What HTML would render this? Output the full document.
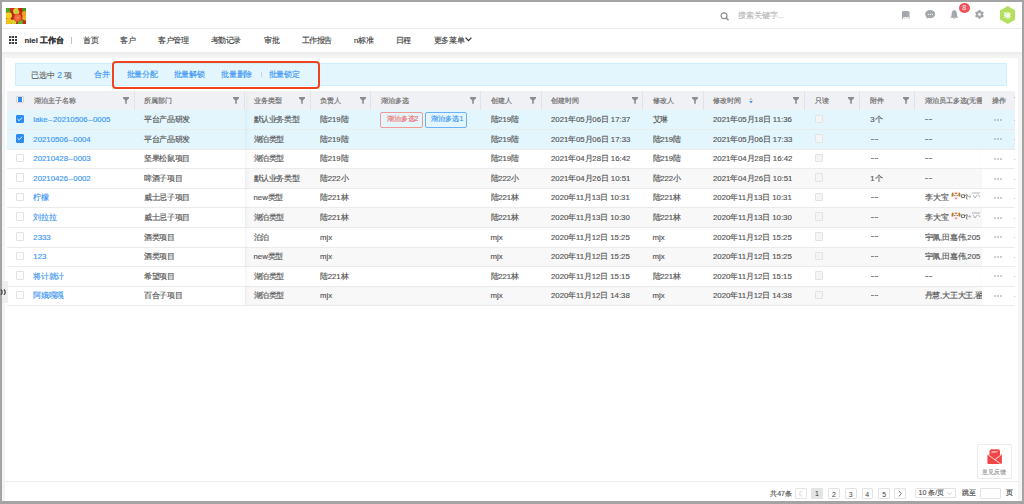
<!DOCTYPE html>
<html><head><meta charset="utf-8"><script>
(function(){try{var c=document.createElement('canvas');var x=c.getContext('2d');x.font='20px "Liberation Sans", sans-serif';var w=x.measureText('中文').width;if(w<36)document.documentElement.className+=' tofu';}catch(e){}})();
</script><style>
*{margin:0;padding:0;box-sizing:border-box}
html,body{width:1024px;height:504px;overflow:hidden;background:#f4f4f4;font-family:"Liberation Sans",sans-serif;color:#555}
.ab{position:absolute}
.t{position:absolute;white-space:nowrap;font-size:7.8px;line-height:10px;-webkit-text-stroke:0.15px currentColor}
.frame{position:absolute;background:#a4a4a4}
.cj{display:inline-block;text-align:justify;text-align-last:justify;white-space:nowrap}
.bd .cj{letter-spacing:-0.35px}
.cj1{text-align:center;text-align-last:center}
.tofu .cj{font-size:125%;line-height:0}
.nav .cj{letter-spacing:-0.4px}
.hd{color:#666;font-size:7.4px;-webkit-text-stroke:0.2px #777}
.lk{color:#3b96f5}
.fil{position:absolute;width:6px;height:7px}
.cb{position:absolute;width:8px;height:8.5px;border:0.6px solid #e2e2e2;border-radius:1px;background:#fff}
.cbon{background:#2d8cf0;border-color:#2d8cf0}
.rl{position:absolute;left:4.5px;width:1010.5px;height:0.7px;background:#ebebeb}
</style></head><body>

<div class="ab" style="left:0;top:0;width:1024px;height:52px;background:#fff"></div>
<div class="ab" style="left:0;top:51.6px;width:1024px;height:4px;background:linear-gradient(#ebebeb,#f4f4f4)"></div>
<div class="ab" style="left:0;top:28.3px;width:1024px;height:0.7px;background:#ececec"></div>
<div class="ab" style="left:4.5px;top:58px;width:1013px;height:443px;background:#fff"></div>
<div class="frame" style="left:0;top:0;width:1024px;height:1.6px"></div>
<div class="frame" style="left:0;top:0;width:2px;height:504px"></div>
<div class="frame" style="left:1021.7px;top:0;width:2.3px;height:504px"></div>
<div class="frame" style="left:0;top:501.3px;width:1024px;height:2.7px"></div>
<svg class="ab" style="left:6.2px;top:7.6px" width="19.8" height="16.6" viewBox="0 0 20 16.6">
<rect width="20" height="16.6" fill="#b8281a"/>
<circle cx="2" cy="2" r="2.8" fill="#4caa20"/><circle cx="6" cy="1.2" r="2.2" fill="#d8281c"/><circle cx="10.5" cy="3.2" r="3.2" fill="#d4d832"/><circle cx="10.8" cy="3.6" r="1.6" fill="#bcd040"/>
<circle cx="14.8" cy="1.5" r="2.4" fill="#d21e14"/><circle cx="18.6" cy="1.5" r="2.2" fill="#3c9c1c"/><circle cx="18.5" cy="5.5" r="2.6" fill="#f0a020"/><circle cx="18.8" cy="10" r="2.5" fill="#e8b420"/>
<circle cx="2.6" cy="7.5" r="3.4" fill="#f2d420"/><circle cx="2.8" cy="13.5" r="3.2" fill="#f0c418"/><circle cx="7.8" cy="14.2" r="2.6" fill="#d8d430"/><circle cx="14.6" cy="14.6" r="2.8" fill="#58b828"/><circle cx="18.8" cy="14.8" r="2" fill="#c82818"/>
<circle cx="11.8" cy="9.8" r="4" fill="#e8482a"/><circle cx="11.8" cy="9.8" r="3.2" fill="#f26a40"/><circle cx="11.8" cy="9.8" r="0.7" fill="#f8b080"/>
</svg>
<svg class="ab" style="left:720px;top:11.5px" width="9.5" height="9" viewBox="0 0 10 10"><circle cx="4.2" cy="4.2" r="3.3" fill="none" stroke="#8a8a8a" stroke-width="1.3"/><path d="M6.6 6.6 L9.2 9.2" stroke="#8a8a8a" stroke-width="1.5"/></svg>
<div class="t" style="left:737.5px;top:10.5px;color:#b8b8b8;font-size:7.6px"><span class="cj" style="width:40.00px">搜索关键字</span>...</div>
<svg class="ab" style="left:901.5px;top:10.7px" width="8.5" height="8.8" viewBox="0 0 8.5 8.8"><rect x="0.8" y="0.8" width="7.7" height="7.8" rx="1" fill="#c9ccd1"/><rect x="0" y="0" width="6.8" height="8.8" rx="1" fill="#a4a8ae"/><rect x="1" y="6" width="6.2" height="2" fill="#e9eaec"/></svg>
<svg class="ab" style="left:924.8px;top:10.1px" width="10.4" height="8.8" viewBox="0 0 10.4 8.8"><ellipse cx="5.2" cy="4.1" rx="5.1" ry="4.1" fill="#a4a8ae"/><path d="M1.6 6.3 L1.4 8.7 L4.2 7.6z" fill="#a4a8ae"/><circle cx="3.4" cy="4.4" r="0.65" fill="#eef0f2"/><circle cx="5.4" cy="4.4" r="0.65" fill="#eef0f2"/><circle cx="7.4" cy="4.4" r="0.65" fill="#eef0f2"/></svg>
<svg class="ab" style="left:949.8px;top:10px" width="8.6" height="9.4" viewBox="0 0 8.6 9.4"><path d="M4.3 0 C2.4 0.4 1.6 2 1.6 4 L1.5 6 Q1.2 7 0 7.8 L8.6 7.8 Q7.4 7 7.1 6 L7 4 C7 2 6.2 0.4 4.3 0z" fill="#a4a8ae"/><path d="M3.2 8 Q4.3 9.6 5.4 8z" fill="#a4a8ae"/></svg>
<div class="ab" style="left:958.9px;top:3px;width:10.7px;height:10px;border-radius:50%;background:#f2535a;color:#fff;font-size:7px;line-height:10px;text-align:center">8</div>
<svg class="ab" style="left:974.7px;top:10.2px" width="9" height="8.8" viewBox="-4.5 -4.4 9 8.8"><g fill="#a4a8ae"><circle cx="0" cy="-3.2" r="1.35" transform="rotate(0)"/><circle cx="0" cy="-3.2" r="1.35" transform="rotate(60)"/><circle cx="0" cy="-3.2" r="1.35" transform="rotate(120)"/><circle cx="0" cy="-3.2" r="1.35" transform="rotate(180)"/><circle cx="0" cy="-3.2" r="1.35" transform="rotate(240)"/><circle cx="0" cy="-3.2" r="1.35" transform="rotate(300)"/><circle r="3.3"/></g><circle r="1.3" fill="#fff"/></svg>
<svg class="ab" style="left:999.8px;top:6px" width="15.6" height="18" viewBox="0 0 15.6 18"><path d="M7.8 0 L15.6 4.5 L15.6 13.5 L7.8 18 L0 13.5 L0 4.5z" fill="#b3df5e"/></svg>
<div class="t" style="left:1003.8px;top:10.8px;color:#fff;font-size:6.8px;-webkit-text-stroke:0.2px #fff"><span class="cj cj1" style="width:7.00px">琳</span></div>
<svg class="ab" style="left:8.6px;top:36.1px" width="8.1" height="8" viewBox="0 0 8.1 8"><g fill="#333"><rect x="0" y="0" width="2.1" height="2" rx="0.5"/><rect x="0" y="3" width="2.1" height="2" rx="0.5"/><rect x="0" y="6" width="2.1" height="2" rx="0.5"/><rect x="3" y="0" width="2.1" height="2" rx="0.5"/><rect x="3" y="3" width="2.1" height="2" rx="0.5"/><rect x="3" y="6" width="2.1" height="2" rx="0.5"/><rect x="6" y="0" width="2.1" height="2" rx="0.5"/><rect x="6" y="3" width="2.1" height="2" rx="0.5"/><rect x="6" y="6" width="2.1" height="2" rx="0.5"/></g><g fill="#666"><rect x="1" y="0.5" width="3" height="1"/><rect x="1" y="6.5" width="3" height="1"/></g></svg>
<div class="t" style="left:24.4px;top:35.7px;color:#333;font-weight:bold;font-size:7.8px">niel <span class="cj" style="width:24.00px">工作台</span></div>
<div class="ab" style="left:71.1px;top:37px;width:0.7px;height:6.5px;background:#c4c4c4"></div>
<div class="t nav" style="left:83.4px;top:35.9px;color:#444;font-size:7.7px"><span class="cj" style="width:15.20px">首页</span></div>
<div class="t nav" style="left:120.3px;top:35.9px;color:#444;font-size:7.7px"><span class="cj" style="width:15.20px">客户</span></div>
<div class="t nav" style="left:158px;top:35.9px;color:#444;font-size:7.7px"><span class="cj" style="width:30.41px">客户管理</span></div>
<div class="t nav" style="left:210.6px;top:35.9px;color:#444;font-size:7.7px"><span class="cj" style="width:30.41px">考勤记录</span></div>
<div class="t nav" style="left:264.3px;top:35.9px;color:#444;font-size:7.7px"><span class="cj" style="width:15.20px">审批</span></div>
<div class="t nav" style="left:301.5px;top:35.9px;color:#444;font-size:7.7px"><span class="cj" style="width:30.41px">工作报告</span></div>
<div class="t nav" style="left:354px;top:35.9px;color:#444;font-size:7.7px">n<span class="cj" style="width:15.20px">标准</span></div>
<div class="t nav" style="left:395.6px;top:35.9px;color:#444;font-size:7.7px"><span class="cj" style="width:15.20px">日程</span></div>
<div class="t nav" style="left:433.8px;top:35.9px;color:#444;font-size:7.7px"><span class="cj" style="width:30.41px">更多菜单</span></div>
<svg class="ab" style="left:465px;top:37.2px" width="7" height="4.4" viewBox="0 0 7 4.4"><path d="M0.6 0.6 L3.5 3.6 L6.4 0.6" fill="none" stroke="#333" stroke-width="1.2"/></svg>
<div class="ab" style="left:15.3px;top:62.8px;width:991.5px;height:23px;background:#e4f6fd;border:0.7px solid #d0effc"></div>
<div class="t" style="left:31px;top:69.5px;color:#666"><span class="cj" style="width:24.00px">已选中</span> <span class="lk" style="font-size:8.6px">2</span> <span class="cj cj1" style="width:8.00px">项</span></div>
<div class="t lk" style="left:94.4px;top:69.7px;font-size:7.7px;letter-spacing:-0.4px"><span class="cj" style="width:15.20px">合并</span></div>
<div class="t lk" style="left:126.9px;top:69.7px;font-size:7.7px;letter-spacing:-0.4px"><span class="cj" style="width:30.41px">批量分配</span></div>
<div class="t lk" style="left:173.9px;top:69.7px;font-size:7.7px;letter-spacing:-0.4px"><span class="cj" style="width:30.41px">批量解锁</span></div>
<div class="t lk" style="left:221.4px;top:69.7px;font-size:7.7px;letter-spacing:-0.4px"><span class="cj" style="width:30.41px">批量删除</span></div>
<div class="t lk" style="left:268.9px;top:69.7px;font-size:7.7px;letter-spacing:-0.4px"><span class="cj" style="width:30.41px">批量锁定</span></div>
<div class="ab" style="left:260.8px;top:72px;width:0.6px;height:5px;background:#c8d8e0"></div>
<div class="ab" style="left:111.8px;top:60.6px;width:208px;height:28.7px;border:2px solid #f0441e;border-radius:4px"></div>
<div class="ab" style="left:7px;top:91px;width:1008px;height:19.4px;background:#f0f1f4"></div>
<div class="ab" style="left:134.4px;top:91px;width:0.8px;height:19px;background:#e2e3e6"></div>
<div class="ab" style="left:244.4px;top:91px;width:0.8px;height:19px;background:#e2e3e6"></div>
<div class="ab" style="left:310.4px;top:91px;width:0.8px;height:19px;background:#e2e3e6"></div>
<div class="ab" style="left:370.4px;top:91px;width:0.8px;height:19px;background:#e2e3e6"></div>
<div class="ab" style="left:480.4px;top:91px;width:0.8px;height:19px;background:#e2e3e6"></div>
<div class="ab" style="left:541.4px;top:91px;width:0.8px;height:19px;background:#e2e3e6"></div>
<div class="ab" style="left:642.4px;top:91px;width:0.8px;height:19px;background:#e2e3e6"></div>
<div class="ab" style="left:703.4px;top:91px;width:0.8px;height:19px;background:#e2e3e6"></div>
<div class="ab" style="left:804.4px;top:91px;width:0.8px;height:19px;background:#e2e3e6"></div>
<div class="ab" style="left:859.4px;top:91px;width:0.8px;height:19px;background:#e2e3e6"></div>
<div class="ab" style="left:914.4px;top:91px;width:0.8px;height:19px;background:#e2e3e6"></div>
<div class="t hd" style="left:33.5px;top:95.5px"><span class="cj" style="width:42.00px">湖泊主子名称</span></div>
<div class="t hd" style="left:144px;top:95.5px"><span class="cj" style="width:28.00px">所属部门</span></div>
<div class="t hd" style="left:253.5px;top:95.5px"><span class="cj" style="width:28.00px">业务类型</span></div>
<div class="t hd" style="left:320px;top:95.5px"><span class="cj" style="width:21.00px">负责人</span></div>
<div class="t hd" style="left:380.5px;top:95.5px"><span class="cj" style="width:28.00px">湖泊多选</span></div>
<div class="t hd" style="left:490.5px;top:95.5px"><span class="cj" style="width:21.00px">创建人</span></div>
<div class="t hd" style="left:551px;top:95.5px"><span class="cj" style="width:28.00px">创建时间</span></div>
<div class="t hd" style="left:652.5px;top:95.5px"><span class="cj" style="width:21.00px">修改人</span></div>
<div class="t hd" style="left:713px;top:95.5px"><span class="cj" style="width:28.00px">修改时间</span></div>
<div class="t hd" style="left:814.5px;top:95.5px"><span class="cj" style="width:14.00px">只读</span></div>
<div class="t hd" style="left:869.5px;top:95.5px"><span class="cj" style="width:14.00px">附件</span></div>
<div class="t hd" style="left:924.5px;top:95.5px"><span class="cj" style="width:42.00px">湖泊员工多选</span>(<span class="cj" style="width:14.00px">无需</span></div>
<svg class="fil" style="left:123.2px;top:96.6px" viewBox="0 0 6 7"><path d="M0 0 H6 V1.2 L3.8 3.4 V6.8 H2.2 V3.4 L0 1.2z" fill="#8c8c8c"/></svg>
<svg class="fil" style="left:233px;top:96.6px" viewBox="0 0 6 7"><path d="M0 0 H6 V1.2 L3.8 3.4 V6.8 H2.2 V3.4 L0 1.2z" fill="#8c8c8c"/></svg>
<svg class="fil" style="left:299px;top:96.6px" viewBox="0 0 6 7"><path d="M0 0 H6 V1.2 L3.8 3.4 V6.8 H2.2 V3.4 L0 1.2z" fill="#8c8c8c"/></svg>
<svg class="fil" style="left:359.5px;top:96.6px" viewBox="0 0 6 7"><path d="M0 0 H6 V1.2 L3.8 3.4 V6.8 H2.2 V3.4 L0 1.2z" fill="#8c8c8c"/></svg>
<svg class="fil" style="left:469.5px;top:96.6px" viewBox="0 0 6 7"><path d="M0 0 H6 V1.2 L3.8 3.4 V6.8 H2.2 V3.4 L0 1.2z" fill="#8c8c8c"/></svg>
<svg class="fil" style="left:530px;top:96.6px" viewBox="0 0 6 7"><path d="M0 0 H6 V1.2 L3.8 3.4 V6.8 H2.2 V3.4 L0 1.2z" fill="#8c8c8c"/></svg>
<svg class="fil" style="left:631.5px;top:96.6px" viewBox="0 0 6 7"><path d="M0 0 H6 V1.2 L3.8 3.4 V6.8 H2.2 V3.4 L0 1.2z" fill="#8c8c8c"/></svg>
<svg class="fil" style="left:692px;top:96.6px" viewBox="0 0 6 7"><path d="M0 0 H6 V1.2 L3.8 3.4 V6.8 H2.2 V3.4 L0 1.2z" fill="#8c8c8c"/></svg>
<svg class="fil" style="left:793px;top:96.6px" viewBox="0 0 6 7"><path d="M0 0 H6 V1.2 L3.8 3.4 V6.8 H2.2 V3.4 L0 1.2z" fill="#8c8c8c"/></svg>
<svg class="fil" style="left:848px;top:96.6px" viewBox="0 0 6 7"><path d="M0 0 H6 V1.2 L3.8 3.4 V6.8 H2.2 V3.4 L0 1.2z" fill="#8c8c8c"/></svg>
<svg class="fil" style="left:903px;top:96.6px" viewBox="0 0 6 7"><path d="M0 0 H6 V1.2 L3.8 3.4 V6.8 H2.2 V3.4 L0 1.2z" fill="#8c8c8c"/></svg>
<svg class="ab" style="left:748.5px;top:97px" width="4" height="7" viewBox="0 0 4 7"><path d="M0.2 3 L2 0.8 L3.8 3z" fill="#c0c0c0"/><path d="M0.2 4 L2 6.2 L3.8 4z" fill="#2d8cf0"/></svg>
<div class="cb" style="left:16.3px;top:95.6px;width:7.6px;height:7.5px;border:0.7px solid #d4d4d4"></div>
<div class="ab" style="left:17.7px;top:97px;width:4.8px;height:4.7px;background:#2d8cf0"></div>
<div class="ab" style="left:7px;top:109.8px;width:1008px;height:19.57px;background:#e4f6fd"></div>
<div class="cb cbon" style="left:16px;top:114.5px"></div>
<svg class="ab" style="left:17.3px;top:116.6px" width="5.5" height="4.5" viewBox="0 0 5.5 4.5"><path d="M0.5 2.2 L2.1 3.7 L5 0.7" fill="none" stroke="#fff" stroke-width="0.9"/></svg>
<div class="t bd lk" style="left:33.3px;top:115.1px;">lake<span style="margin:0 0.5px">–</span>20210506<span style="margin:0 0.5px">–</span>0005</div>
<div class="t bd " style="left:144px;top:115.1px;"><span class="cj" style="width:45.91px">平台产品研发</span></div>
<div class="t bd " style="left:253.5px;top:115.1px;"><span class="cj" style="width:45.91px">默认业务类型</span></div>
<div class="t bd " style="left:320px;top:115.1px;"><span class="cj cj1" style="width:7.66px">陆</span>219<span class="cj cj1" style="width:7.66px">陆</span></div>
<div class="ab" style="left:380.2px;top:111.8px;width:42.6px;height:15.8px;border:0.8px solid #f29a9a;border-radius:2px"></div>
<div class="t" style="left:386.6px;top:114.0px;color:#f06a6a;font-size:6.9px"><span class="cj" style="width:28.00px">湖泊多选</span>2</div>
<div class="ab" style="left:425px;top:111.8px;width:41.7px;height:15.8px;border:0.8px solid #6cb2f6;border-radius:2px"></div>
<div class="t" style="left:431.4px;top:114.0px;color:#3b96f5;font-size:6.9px"><span class="cj" style="width:28.00px">湖泊多选</span>1</div>
<div class="t bd " style="left:490.5px;top:115.1px;"><span class="cj cj1" style="width:7.66px">陆</span>219<span class="cj cj1" style="width:7.66px">陆</span></div>
<div class="t bd " style="left:551px;top:115.1px;">2021<span class="cj cj1" style="width:7.66px">年</span>05<span class="cj cj1" style="width:7.66px">月</span>06<span class="cj cj1" style="width:7.66px">日</span> 17:37</div>
<div class="t bd " style="left:652.5px;top:115.1px;"><span class="cj" style="width:15.31px">艾琳</span></div>
<div class="t bd " style="left:713px;top:115.1px;">2021<span class="cj cj1" style="width:7.66px">年</span>05<span class="cj cj1" style="width:7.66px">月</span>18<span class="cj cj1" style="width:7.66px">日</span> 11:36</div>
<div class="cb" style="left:815px;top:114.6px;background:#f5f5f5;border-color:#e3e3e3"></div>
<div class="t bd " style="left:870.3px;top:115.1px;">3<span class="cj cj1" style="width:7.66px">个</span></div>
<svg class="ab" style="left:925.0px;top:119.0px" width="8" height="1" viewBox="0 0 8 1"><rect x="0" y="0" width="3.3" height="1" fill="#8a8a8a"/><rect x="3.9" y="0" width="3.3" height="1" fill="#8a8a8a"/></svg>
<div class="ab" style="left:7px;top:129.37px;width:1008px;height:19.57px;background:#e4f6fd"></div>
<div class="cb cbon" style="left:16px;top:134.07px"></div>
<svg class="ab" style="left:17.3px;top:136.17000000000002px" width="5.5" height="4.5" viewBox="0 0 5.5 4.5"><path d="M0.5 2.2 L2.1 3.7 L5 0.7" fill="none" stroke="#fff" stroke-width="0.9"/></svg>
<div class="t bd lk" style="left:33.3px;top:134.67000000000002px;">20210506<span style="margin:0 0.5px">–</span>0004</div>
<div class="t bd " style="left:144px;top:134.67000000000002px;"><span class="cj" style="width:45.91px">平台产品研发</span></div>
<div class="t bd " style="left:253.5px;top:134.67000000000002px;"><span class="cj" style="width:30.61px">湖泊类型</span></div>
<div class="t bd " style="left:320px;top:134.67000000000002px;"><span class="cj cj1" style="width:7.66px">陆</span>219<span class="cj cj1" style="width:7.66px">陆</span></div>
<div class="t bd " style="left:490.5px;top:134.67000000000002px;"><span class="cj cj1" style="width:7.66px">陆</span>219<span class="cj cj1" style="width:7.66px">陆</span></div>
<div class="t bd " style="left:551px;top:134.67000000000002px;">2021<span class="cj cj1" style="width:7.66px">年</span>05<span class="cj cj1" style="width:7.66px">月</span>06<span class="cj cj1" style="width:7.66px">日</span> 17:33</div>
<div class="t bd " style="left:652.5px;top:134.67000000000002px;"><span class="cj cj1" style="width:7.66px">陆</span>219<span class="cj cj1" style="width:7.66px">陆</span></div>
<div class="t bd " style="left:713px;top:134.67000000000002px;">2021<span class="cj cj1" style="width:7.66px">年</span>05<span class="cj cj1" style="width:7.66px">月</span>06<span class="cj cj1" style="width:7.66px">日</span> 17:33</div>
<div class="cb" style="left:815px;top:134.17000000000002px;background:#f5f5f5;border-color:#e3e3e3"></div>
<svg class="ab" style="left:870.5px;top:138.57px" width="8" height="1" viewBox="0 0 8 1"><rect x="0" y="0" width="3.3" height="1" fill="#8a8a8a"/><rect x="3.9" y="0" width="3.3" height="1" fill="#8a8a8a"/></svg>
<svg class="ab" style="left:925.0px;top:138.57px" width="8" height="1" viewBox="0 0 8 1"><rect x="0" y="0" width="3.3" height="1" fill="#8a8a8a"/><rect x="3.9" y="0" width="3.3" height="1" fill="#8a8a8a"/></svg>
<div class="ab" style="left:7px;top:148.94px;width:1008px;height:19.57px;background:#fff"></div>
<div class="cb" style="left:16px;top:153.74px"></div>
<div class="t bd lk" style="left:33.3px;top:154.24px;">20210428<span style="margin:0 0.5px">–</span>0003</div>
<div class="t bd " style="left:144px;top:154.24px;"><span class="cj" style="width:45.91px">坚果松鼠项目</span></div>
<div class="t bd " style="left:253.5px;top:154.24px;"><span class="cj" style="width:30.61px">湖泊类型</span></div>
<div class="t bd " style="left:320px;top:154.24px;"><span class="cj cj1" style="width:7.66px">陆</span>219<span class="cj cj1" style="width:7.66px">陆</span></div>
<div class="t bd " style="left:490.5px;top:154.24px;"><span class="cj cj1" style="width:7.66px">陆</span>219<span class="cj cj1" style="width:7.66px">陆</span></div>
<div class="t bd " style="left:551px;top:154.24px;">2021<span class="cj cj1" style="width:7.66px">年</span>04<span class="cj cj1" style="width:7.66px">月</span>28<span class="cj cj1" style="width:7.66px">日</span> 16:42</div>
<div class="t bd " style="left:652.5px;top:154.24px;"><span class="cj cj1" style="width:7.66px">陆</span>219<span class="cj cj1" style="width:7.66px">陆</span></div>
<div class="t bd " style="left:713px;top:154.24px;">2021<span class="cj cj1" style="width:7.66px">年</span>04<span class="cj cj1" style="width:7.66px">月</span>28<span class="cj cj1" style="width:7.66px">日</span> 16:42</div>
<div class="cb" style="left:815px;top:153.74px;background:#f5f5f5;border-color:#e3e3e3"></div>
<svg class="ab" style="left:870.5px;top:158.14px" width="8" height="1" viewBox="0 0 8 1"><rect x="0" y="0" width="3.3" height="1" fill="#8a8a8a"/><rect x="3.9" y="0" width="3.3" height="1" fill="#8a8a8a"/></svg>
<svg class="ab" style="left:925.0px;top:158.14px" width="8" height="1" viewBox="0 0 8 1"><rect x="0" y="0" width="3.3" height="1" fill="#8a8a8a"/><rect x="3.9" y="0" width="3.3" height="1" fill="#8a8a8a"/></svg>
<div class="ab" style="left:7px;top:168.51px;width:1008px;height:19.57px;background:#fff"></div>
<div class="ab" style="left:245px;top:168.51px;width:737px;height:19.57px;background:#f8f8f8"></div>
<div class="cb" style="left:16px;top:173.31px"></div>
<div class="t bd lk" style="left:33.3px;top:173.81px;">20210426<span style="margin:0 0.5px">–</span>0002</div>
<div class="t bd " style="left:144px;top:173.81px;"><span class="cj" style="width:38.27px">啤酒子项目</span></div>
<div class="t bd " style="left:253.5px;top:173.81px;"><span class="cj" style="width:45.91px">默认业务类型</span></div>
<div class="t bd " style="left:320px;top:173.81px;"><span class="cj cj1" style="width:7.66px">陆</span>222<span class="cj cj1" style="width:7.66px">小</span></div>
<div class="t bd " style="left:490.5px;top:173.81px;"><span class="cj cj1" style="width:7.66px">陆</span>222<span class="cj cj1" style="width:7.66px">小</span></div>
<div class="t bd " style="left:551px;top:173.81px;">2021<span class="cj cj1" style="width:7.66px">年</span>04<span class="cj cj1" style="width:7.66px">月</span>26<span class="cj cj1" style="width:7.66px">日</span> 10:51</div>
<div class="t bd " style="left:652.5px;top:173.81px;"><span class="cj cj1" style="width:7.66px">陆</span>222<span class="cj cj1" style="width:7.66px">小</span></div>
<div class="t bd " style="left:713px;top:173.81px;">2021<span class="cj cj1" style="width:7.66px">年</span>04<span class="cj cj1" style="width:7.66px">月</span>26<span class="cj cj1" style="width:7.66px">日</span> 10:51</div>
<div class="cb" style="left:815px;top:173.31px;background:#f5f5f5;border-color:#e3e3e3"></div>
<div class="t bd " style="left:870.3px;top:173.81px;">1<span class="cj cj1" style="width:7.66px">个</span></div>
<svg class="ab" style="left:925.0px;top:177.70999999999998px" width="8" height="1" viewBox="0 0 8 1"><rect x="0" y="0" width="3.3" height="1" fill="#8a8a8a"/><rect x="3.9" y="0" width="3.3" height="1" fill="#8a8a8a"/></svg>
<div class="ab" style="left:7px;top:188.07999999999998px;width:1008px;height:19.57px;background:#fff"></div>
<div class="cb" style="left:16px;top:192.88px"></div>
<div class="t bd lk" style="left:33.3px;top:193.38px;"><span class="cj" style="width:15.31px">柠檬</span></div>
<div class="t bd " style="left:144px;top:193.38px;"><span class="cj" style="width:45.91px">威士忌子项目</span></div>
<div class="t bd " style="left:253.5px;top:193.38px;">new<span class="cj" style="width:15.31px">类型</span></div>
<div class="t bd " style="left:320px;top:193.38px;"><span class="cj cj1" style="width:7.66px">陆</span>221<span class="cj cj1" style="width:7.66px">林</span></div>
<div class="t bd " style="left:490.5px;top:193.38px;"><span class="cj cj1" style="width:7.66px">陆</span>221<span class="cj cj1" style="width:7.66px">林</span></div>
<div class="t bd " style="left:551px;top:193.38px;">2020<span class="cj cj1" style="width:7.66px">年</span>11<span class="cj cj1" style="width:7.66px">月</span>13<span class="cj cj1" style="width:7.66px">日</span> 10:31</div>
<div class="t bd " style="left:652.5px;top:193.38px;"><span class="cj cj1" style="width:7.66px">陆</span>221<span class="cj cj1" style="width:7.66px">林</span></div>
<div class="t bd " style="left:713px;top:193.38px;">2020<span class="cj cj1" style="width:7.66px">年</span>11<span class="cj cj1" style="width:7.66px">月</span>13<span class="cj cj1" style="width:7.66px">日</span> 10:31</div>
<div class="cb" style="left:815px;top:192.88px;background:#f5f5f5;border-color:#e3e3e3"></div>
<svg class="ab" style="left:870.5px;top:197.27999999999997px" width="8" height="1" viewBox="0 0 8 1"><rect x="0" y="0" width="3.3" height="1" fill="#8a8a8a"/><rect x="3.9" y="0" width="3.3" height="1" fill="#8a8a8a"/></svg>
<div class="t" style="left:924.8px;top:193.38px"><span class="cj" style="width:24.00px">李大宝</span></div>
<svg class="ab" style="left:951px;top:191.38px" width="32" height="9" viewBox="0 0 32 9"><ellipse cx="5" cy="4.5" rx="3.6" ry="3.9" fill="#f4efe8"/><path d="M1.6 1.2 Q0 2.5 0.6 5.5 Q1.8 6 2.6 4.5 Q3 2 1.6 1.2z" fill="#c07428"/><path d="M8.4 1.2 Q10 2.5 9.4 5.5 Q8.2 6 7.4 4.5 Q7 2 8.4 1.2z" fill="#c07428"/><path d="M3.5 2 Q5 1 6.5 2 L6 3.2 Q5 2.4 4 3.2z" fill="#c98a40"/><circle cx="3.9" cy="4.4" r="0.5" fill="#333"/><circle cx="6.1" cy="4.4" r="0.5" fill="#333"/><ellipse cx="5" cy="7.3" rx="0.8" ry="0.9" fill="#f06a80"/><path d="M10.5 3.8 H13.5 V6.5 H10.5z M13.5 4.8 Q15 4.5 16 3.5 Q17 5 15.5 6 L16 8.5" fill="none" stroke="#444" stroke-width="0.7"/><path d="M17.5 5.5 Q19 4 20 5.5 Q19 7 17.5 5.5z M21 2 H29 M22 4 L24 7 L26 4 M27 3.5 L29 6" fill="none" stroke="#666" stroke-width="0.5"/></svg>
<div class="ab" style="left:7px;top:207.64999999999998px;width:1008px;height:19.57px;background:#fff"></div>
<div class="ab" style="left:245px;top:207.64999999999998px;width:737px;height:19.57px;background:#f8f8f8"></div>
<div class="cb" style="left:16px;top:212.45px"></div>
<div class="t bd lk" style="left:33.3px;top:212.95px;"><span class="cj" style="width:22.95px">刘拉拉</span></div>
<div class="t bd " style="left:144px;top:212.95px;"><span class="cj" style="width:45.91px">威士忌子项目</span></div>
<div class="t bd " style="left:253.5px;top:212.95px;"><span class="cj" style="width:30.61px">湖泊类型</span></div>
<div class="t bd " style="left:320px;top:212.95px;"><span class="cj cj1" style="width:7.66px">陆</span>221<span class="cj cj1" style="width:7.66px">林</span></div>
<div class="t bd " style="left:490.5px;top:212.95px;"><span class="cj cj1" style="width:7.66px">陆</span>221<span class="cj cj1" style="width:7.66px">林</span></div>
<div class="t bd " style="left:551px;top:212.95px;">2020<span class="cj cj1" style="width:7.66px">年</span>11<span class="cj cj1" style="width:7.66px">月</span>13<span class="cj cj1" style="width:7.66px">日</span> 10:30</div>
<div class="t bd " style="left:652.5px;top:212.95px;"><span class="cj cj1" style="width:7.66px">陆</span>221<span class="cj cj1" style="width:7.66px">林</span></div>
<div class="t bd " style="left:713px;top:212.95px;">2020<span class="cj cj1" style="width:7.66px">年</span>11<span class="cj cj1" style="width:7.66px">月</span>13<span class="cj cj1" style="width:7.66px">日</span> 10:30</div>
<div class="cb" style="left:815px;top:212.45px;background:#f5f5f5;border-color:#e3e3e3"></div>
<svg class="ab" style="left:870.5px;top:216.84999999999997px" width="8" height="1" viewBox="0 0 8 1"><rect x="0" y="0" width="3.3" height="1" fill="#8a8a8a"/><rect x="3.9" y="0" width="3.3" height="1" fill="#8a8a8a"/></svg>
<div class="t" style="left:924.8px;top:212.95px"><span class="cj" style="width:24.00px">李大宝</span></div>
<svg class="ab" style="left:951px;top:210.95px" width="32" height="9" viewBox="0 0 32 9"><ellipse cx="5" cy="4.5" rx="3.6" ry="3.9" fill="#f4efe8"/><path d="M1.6 1.2 Q0 2.5 0.6 5.5 Q1.8 6 2.6 4.5 Q3 2 1.6 1.2z" fill="#c07428"/><path d="M8.4 1.2 Q10 2.5 9.4 5.5 Q8.2 6 7.4 4.5 Q7 2 8.4 1.2z" fill="#c07428"/><path d="M3.5 2 Q5 1 6.5 2 L6 3.2 Q5 2.4 4 3.2z" fill="#c98a40"/><circle cx="3.9" cy="4.4" r="0.5" fill="#333"/><circle cx="6.1" cy="4.4" r="0.5" fill="#333"/><ellipse cx="5" cy="7.3" rx="0.8" ry="0.9" fill="#f06a80"/><path d="M10.5 3.8 H13.5 V6.5 H10.5z M13.5 4.8 Q15 4.5 16 3.5 Q17 5 15.5 6 L16 8.5" fill="none" stroke="#444" stroke-width="0.7"/><path d="M17.5 5.5 Q19 4 20 5.5 Q19 7 17.5 5.5z M21 2 H29 M22 4 L24 7 L26 4 M27 3.5 L29 6" fill="none" stroke="#666" stroke-width="0.5"/></svg>
<div class="ab" style="left:7px;top:227.22px;width:1008px;height:19.57px;background:#fff"></div>
<div class="cb" style="left:16px;top:232.02px"></div>
<div class="t bd lk" style="left:33.3px;top:232.52px;">2333</div>
<div class="t bd " style="left:144px;top:232.52px;"><span class="cj" style="width:30.61px">酒类项目</span></div>
<div class="t bd " style="left:253.5px;top:232.52px;"><span class="cj" style="width:15.31px">泊泊</span></div>
<div class="t bd " style="left:320px;top:232.52px;">mjx</div>
<div class="t bd " style="left:490.5px;top:232.52px;">mjx</div>
<div class="t bd " style="left:551px;top:232.52px;">2020<span class="cj cj1" style="width:7.66px">年</span>11<span class="cj cj1" style="width:7.66px">月</span>12<span class="cj cj1" style="width:7.66px">日</span> 15:25</div>
<div class="t bd " style="left:652.5px;top:232.52px;">mjx</div>
<div class="t bd " style="left:713px;top:232.52px;">2020<span class="cj cj1" style="width:7.66px">年</span>11<span class="cj cj1" style="width:7.66px">月</span>12<span class="cj cj1" style="width:7.66px">日</span> 15:25</div>
<div class="cb" style="left:815px;top:232.02px;background:#f5f5f5;border-color:#e3e3e3"></div>
<svg class="ab" style="left:870.5px;top:236.42px" width="8" height="1" viewBox="0 0 8 1"><rect x="0" y="0" width="3.3" height="1" fill="#8a8a8a"/><rect x="3.9" y="0" width="3.3" height="1" fill="#8a8a8a"/></svg>
<div class="t bd " style="left:924.8px;top:232.52px;width:58px;overflow:hidden;"><span class="cj" style="width:15.31px">宇佩</span>,<span class="cj" style="width:22.95px">田嘉伟</span>,205</div>
<div class="ab" style="left:7px;top:246.79000000000002px;width:1008px;height:19.57px;background:#fff"></div>
<div class="ab" style="left:245px;top:246.79000000000002px;width:737px;height:19.57px;background:#f8f8f8"></div>
<div class="cb" style="left:16px;top:251.59000000000003px"></div>
<div class="t bd lk" style="left:33.3px;top:252.09000000000003px;">123</div>
<div class="t bd " style="left:144px;top:252.09000000000003px;"><span class="cj" style="width:30.61px">酒类项目</span></div>
<div class="t bd " style="left:253.5px;top:252.09000000000003px;">new<span class="cj" style="width:15.31px">类型</span></div>
<div class="t bd " style="left:320px;top:252.09000000000003px;">mjx</div>
<div class="t bd " style="left:490.5px;top:252.09000000000003px;">mjx</div>
<div class="t bd " style="left:551px;top:252.09000000000003px;">2020<span class="cj cj1" style="width:7.66px">年</span>11<span class="cj cj1" style="width:7.66px">月</span>12<span class="cj cj1" style="width:7.66px">日</span> 15:25</div>
<div class="t bd " style="left:652.5px;top:252.09000000000003px;">mjx</div>
<div class="t bd " style="left:713px;top:252.09000000000003px;">2020<span class="cj cj1" style="width:7.66px">年</span>11<span class="cj cj1" style="width:7.66px">月</span>12<span class="cj cj1" style="width:7.66px">日</span> 15:25</div>
<div class="cb" style="left:815px;top:251.59000000000003px;background:#f5f5f5;border-color:#e3e3e3"></div>
<svg class="ab" style="left:870.5px;top:255.99px" width="8" height="1" viewBox="0 0 8 1"><rect x="0" y="0" width="3.3" height="1" fill="#8a8a8a"/><rect x="3.9" y="0" width="3.3" height="1" fill="#8a8a8a"/></svg>
<div class="t bd " style="left:924.8px;top:252.09000000000003px;width:58px;overflow:hidden;"><span class="cj" style="width:15.31px">宇佩</span>,<span class="cj" style="width:22.95px">田嘉伟</span>,205</div>
<div class="ab" style="left:7px;top:266.36px;width:1008px;height:19.57px;background:#fff"></div>
<div class="cb" style="left:16px;top:271.16px"></div>
<div class="t bd lk" style="left:33.3px;top:271.66px;"><span class="cj" style="width:30.61px">将计就计</span></div>
<div class="t bd " style="left:144px;top:271.66px;"><span class="cj" style="width:30.61px">希望项目</span></div>
<div class="t bd " style="left:253.5px;top:271.66px;"><span class="cj" style="width:30.61px">湖泊类型</span></div>
<div class="t bd " style="left:320px;top:271.66px;"><span class="cj cj1" style="width:7.66px">陆</span>221<span class="cj cj1" style="width:7.66px">林</span></div>
<div class="t bd " style="left:490.5px;top:271.66px;"><span class="cj cj1" style="width:7.66px">陆</span>221<span class="cj cj1" style="width:7.66px">林</span></div>
<div class="t bd " style="left:551px;top:271.66px;">2020<span class="cj cj1" style="width:7.66px">年</span>11<span class="cj cj1" style="width:7.66px">月</span>12<span class="cj cj1" style="width:7.66px">日</span> 15:15</div>
<div class="t bd " style="left:652.5px;top:271.66px;"><span class="cj cj1" style="width:7.66px">陆</span>221<span class="cj cj1" style="width:7.66px">林</span></div>
<div class="t bd " style="left:713px;top:271.66px;">2020<span class="cj cj1" style="width:7.66px">年</span>11<span class="cj cj1" style="width:7.66px">月</span>12<span class="cj cj1" style="width:7.66px">日</span> 15:15</div>
<div class="cb" style="left:815px;top:271.16px;background:#f5f5f5;border-color:#e3e3e3"></div>
<svg class="ab" style="left:870.5px;top:275.56px" width="8" height="1" viewBox="0 0 8 1"><rect x="0" y="0" width="3.3" height="1" fill="#8a8a8a"/><rect x="3.9" y="0" width="3.3" height="1" fill="#8a8a8a"/></svg>
<svg class="ab" style="left:925.0px;top:275.56px" width="8" height="1" viewBox="0 0 8 1"><rect x="0" y="0" width="3.3" height="1" fill="#8a8a8a"/><rect x="3.9" y="0" width="3.3" height="1" fill="#8a8a8a"/></svg>
<div class="ab" style="left:7px;top:285.93px;width:1008px;height:19.57px;background:#fff"></div>
<div class="ab" style="left:245px;top:285.93px;width:737px;height:19.57px;background:#f8f8f8"></div>
<div class="cb" style="left:16px;top:290.73px"></div>
<div class="t bd lk" style="left:33.3px;top:291.23px;"><span class="cj" style="width:30.61px">阿娥嘎嘎</span></div>
<div class="t bd " style="left:144px;top:291.23px;"><span class="cj" style="width:38.27px">百合子项目</span></div>
<div class="t bd " style="left:253.5px;top:291.23px;"><span class="cj" style="width:30.61px">湖泊类型</span></div>
<div class="t bd " style="left:320px;top:291.23px;">mjx</div>
<div class="t bd " style="left:490.5px;top:291.23px;">mjx</div>
<div class="t bd " style="left:551px;top:291.23px;">2020<span class="cj cj1" style="width:7.66px">年</span>11<span class="cj cj1" style="width:7.66px">月</span>12<span class="cj cj1" style="width:7.66px">日</span> 14:38</div>
<div class="t bd " style="left:652.5px;top:291.23px;">mjx</div>
<div class="t bd " style="left:713px;top:291.23px;">2020<span class="cj cj1" style="width:7.66px">年</span>11<span class="cj cj1" style="width:7.66px">月</span>12<span class="cj cj1" style="width:7.66px">日</span> 14:38</div>
<div class="cb" style="left:815px;top:290.73px;background:#f5f5f5;border-color:#e3e3e3"></div>
<svg class="ab" style="left:870.5px;top:295.13px" width="8" height="1" viewBox="0 0 8 1"><rect x="0" y="0" width="3.3" height="1" fill="#8a8a8a"/><rect x="3.9" y="0" width="3.3" height="1" fill="#8a8a8a"/></svg>
<div class="t bd " style="left:924.8px;top:291.23px;width:58px;overflow:hidden;"><span class="cj" style="width:15.31px">丹慧</span>,<span class="cj" style="width:30.61px">大王大王</span>,<span class="cj cj1" style="width:7.66px">翟</span></div>
<div class="ab" style="left:982px;top:91px;width:33px;height:19px;background:#f0f1f4"></div>
<div class="t hd" style="left:991.5px;top:95.5px"><span class="cj" style="width:14.00px">操作</span></div>
<div class="ab" style="left:1014.2px;top:97px;width:0.7px;height:0.9px;background:#bbb"></div>
<div class="ab" style="left:982px;top:109.8px;width:33px;height:19.57px;background:#e4f6fd"></div>
<svg class="ab" style="left:994px;top:118.8px" width="8" height="2" viewBox="0 0 8 2"><circle cx="1" cy="1" r="0.75" fill="#888"/><circle cx="4" cy="1" r="0.75" fill="#888"/><circle cx="7" cy="1" r="0.75" fill="#888"/></svg>
<div class="ab" style="left:1014px;top:119.8px;width:0.7px;height:0.8px;background:#ccc"></div>
<div class="ab" style="left:982px;top:129.37px;width:33px;height:19.57px;background:#e4f6fd"></div>
<svg class="ab" style="left:994px;top:138.37px" width="8" height="2" viewBox="0 0 8 2"><circle cx="1" cy="1" r="0.75" fill="#888"/><circle cx="4" cy="1" r="0.75" fill="#888"/><circle cx="7" cy="1" r="0.75" fill="#888"/></svg>
<div class="ab" style="left:1014px;top:139.37px;width:0.7px;height:0.8px;background:#ccc"></div>
<div class="ab" style="left:982px;top:148.94px;width:33px;height:19.57px;background:#fff"></div>
<svg class="ab" style="left:994px;top:157.94px" width="8" height="2" viewBox="0 0 8 2"><circle cx="1" cy="1" r="0.75" fill="#888"/><circle cx="4" cy="1" r="0.75" fill="#888"/><circle cx="7" cy="1" r="0.75" fill="#888"/></svg>
<div class="ab" style="left:1014px;top:158.94px;width:0.7px;height:0.8px;background:#ccc"></div>
<div class="ab" style="left:982px;top:168.51px;width:33px;height:19.57px;background:#fff"></div>
<svg class="ab" style="left:994px;top:177.51px" width="8" height="2" viewBox="0 0 8 2"><circle cx="1" cy="1" r="0.75" fill="#888"/><circle cx="4" cy="1" r="0.75" fill="#888"/><circle cx="7" cy="1" r="0.75" fill="#888"/></svg>
<div class="ab" style="left:1014px;top:178.51px;width:0.7px;height:0.8px;background:#ccc"></div>
<div class="ab" style="left:982px;top:188.07999999999998px;width:33px;height:19.57px;background:#fff"></div>
<svg class="ab" style="left:994px;top:197.07999999999998px" width="8" height="2" viewBox="0 0 8 2"><circle cx="1" cy="1" r="0.75" fill="#888"/><circle cx="4" cy="1" r="0.75" fill="#888"/><circle cx="7" cy="1" r="0.75" fill="#888"/></svg>
<div class="ab" style="left:1014px;top:198.07999999999998px;width:0.7px;height:0.8px;background:#ccc"></div>
<div class="ab" style="left:982px;top:207.64999999999998px;width:33px;height:19.57px;background:#fff"></div>
<svg class="ab" style="left:994px;top:216.64999999999998px" width="8" height="2" viewBox="0 0 8 2"><circle cx="1" cy="1" r="0.75" fill="#888"/><circle cx="4" cy="1" r="0.75" fill="#888"/><circle cx="7" cy="1" r="0.75" fill="#888"/></svg>
<div class="ab" style="left:1014px;top:217.64999999999998px;width:0.7px;height:0.8px;background:#ccc"></div>
<div class="ab" style="left:982px;top:227.22px;width:33px;height:19.57px;background:#fff"></div>
<svg class="ab" style="left:994px;top:236.22px" width="8" height="2" viewBox="0 0 8 2"><circle cx="1" cy="1" r="0.75" fill="#888"/><circle cx="4" cy="1" r="0.75" fill="#888"/><circle cx="7" cy="1" r="0.75" fill="#888"/></svg>
<div class="ab" style="left:1014px;top:237.22px;width:0.7px;height:0.8px;background:#ccc"></div>
<div class="ab" style="left:982px;top:246.79000000000002px;width:33px;height:19.57px;background:#fff"></div>
<svg class="ab" style="left:994px;top:255.79000000000002px" width="8" height="2" viewBox="0 0 8 2"><circle cx="1" cy="1" r="0.75" fill="#888"/><circle cx="4" cy="1" r="0.75" fill="#888"/><circle cx="7" cy="1" r="0.75" fill="#888"/></svg>
<div class="ab" style="left:1014px;top:256.79px;width:0.7px;height:0.8px;background:#ccc"></div>
<div class="ab" style="left:982px;top:266.36px;width:33px;height:19.57px;background:#fff"></div>
<svg class="ab" style="left:994px;top:275.36px" width="8" height="2" viewBox="0 0 8 2"><circle cx="1" cy="1" r="0.75" fill="#888"/><circle cx="4" cy="1" r="0.75" fill="#888"/><circle cx="7" cy="1" r="0.75" fill="#888"/></svg>
<div class="ab" style="left:1014px;top:276.36px;width:0.7px;height:0.8px;background:#ccc"></div>
<div class="ab" style="left:982px;top:285.93px;width:33px;height:19.57px;background:#fff"></div>
<svg class="ab" style="left:994px;top:294.93px" width="8" height="2" viewBox="0 0 8 2"><circle cx="1" cy="1" r="0.75" fill="#888"/><circle cx="4" cy="1" r="0.75" fill="#888"/><circle cx="7" cy="1" r="0.75" fill="#888"/></svg>
<div class="ab" style="left:1014px;top:295.93px;width:0.7px;height:0.8px;background:#ccc"></div>
<div class="rl" style="left:7px;width:1008px;top:129.17000000000002px"></div>
<div class="rl" style="left:7px;width:1008px;top:148.74px"></div>
<div class="rl" style="left:7px;width:1008px;top:168.31px"></div>
<div class="rl" style="left:7px;width:1008px;top:187.88px"></div>
<div class="rl" style="left:7px;width:1008px;top:207.45px"></div>
<div class="rl" style="left:7px;width:1008px;top:227.01999999999998px"></div>
<div class="rl" style="left:7px;width:1008px;top:246.59px"></div>
<div class="rl" style="left:7px;width:1008px;top:266.16px"></div>
<div class="rl" style="left:7px;width:1008px;top:285.73px"></div>
<div class="rl" style="left:7px;width:1008px;top:305.3px"></div>
<div class="ab" style="left:245px;top:110px;width:0.7px;height:195px;background:rgba(0,0,0,0.04)"></div>
<div class="ab" style="left:245.5px;top:91px;width:4px;height:214px;background:linear-gradient(90deg,rgba(0,0,0,0.025),rgba(0,0,0,0))"></div>
<div class="ab" style="left:980px;top:110px;width:2px;height:195px;background:linear-gradient(270deg,rgba(0,0,0,0.012),rgba(0,0,0,0))"></div>
<div class="ab" style="left:2px;top:281px;width:5.5px;height:22px;background:#eeeeee"></div>
<svg class="ab" style="left:0;top:288.5px" width="7" height="6.5" viewBox="0 0 7 6.5"><path d="M0.9 0.5 Q3.3 3.25 0.9 6 M4 0.5 Q6.4 3.25 4 6" fill="none" stroke="#444" stroke-width="1.2"/></svg>
<div class="ab" style="left:977px;top:444px;width:34.6px;height:35px;border:0.7px solid #ebebeb;border-radius:2px;background:#fff"></div>
<svg class="ab" style="left:987px;top:448.5px" width="15" height="15.5" viewBox="0 0 15 15.5"><rect x="2.5" y="0.3" width="10.5" height="9" rx="2" fill="#f04848"/><rect x="4.5" y="2.4" width="5" height="1.1" fill="#fff" opacity="0.85"/><rect x="9.8" y="2.2" width="1.2" height="0.6" fill="#fff" opacity="0.8"/><path d="M0.4 5.5 L14.9 5.5 L14.9 14 Q14.9 15 13.9 15 L1.4 15 Q0.4 15 0.4 14 Z" fill="#f04848"/><path d="M0.4 5.3 L13.6 14.8" stroke="#fff" stroke-width="0.8"/><path d="M14.9 5.3 L8.2 10.4" stroke="#fff" stroke-width="0.8"/></svg>
<div class="t" style="left:981.6px;top:466.8px;color:#8f8f8f;font-size:6.3px;-webkit-text-stroke:0.1px #999"><span class="cj" style="width:24.00px">意见反馈</span></div>
<div class="ab" style="left:4.5px;top:481px;width:1013px;height:0.7px;background:#ececec"></div>
<div class="t" style="left:770.2px;top:488.6px;color:#555;font-size:7px"><span class="cj cj1" style="width:7.00px">共</span>47<span class="cj cj1" style="width:7.00px">条</span></div>
<div class="ab" style="left:795.3px;top:487.5px;width:11.5px;height:11.2px;border:0.7px solid #e3e3e3;border-radius:1px"></div>
<svg class="ab" style="left:795.3px;top:487.5px" width="11.5" height="11.2" viewBox="0 0 11.5 11.2"><path d="M6.6 2.8 L4.3 5.6 L6.6 8.4" fill="none" stroke="#c4c4c4" stroke-width="0.8"/></svg>
<div class="ab" style="left:811px;top:487.5px;width:12px;height:11px;background:#e4e4e4;font-size:7px;line-height:12.4px;text-align:center;color:#333">1</div>
<div class="ab" style="left:828.3px;top:487.5px;width:11.5px;height:11.2px;border:0.7px solid #e3e3e3;border-radius:1px;font-size:7px;line-height:11.4px;text-align:center;color:#444">2</div>
<div class="ab" style="left:845px;top:487.5px;width:11.5px;height:11.2px;border:0.7px solid #e3e3e3;border-radius:1px;font-size:7px;line-height:11.4px;text-align:center;color:#444">3</div>
<div class="ab" style="left:861.5px;top:487.5px;width:11.5px;height:11.2px;border:0.7px solid #e3e3e3;border-radius:1px;font-size:7px;line-height:11.4px;text-align:center;color:#444">4</div>
<div class="ab" style="left:878.4px;top:487.5px;width:11.5px;height:11.2px;border:0.7px solid #e3e3e3;border-radius:1px;font-size:7px;line-height:11.4px;text-align:center;color:#444">5</div>
<div class="ab" style="left:894.4px;top:487.5px;width:11.5px;height:11.2px;border:0.7px solid #e3e3e3;border-radius:1px"></div>
<svg class="ab" style="left:894.4px;top:487.5px" width="11.5" height="11.2" viewBox="0 0 11.5 11.2"><path d="M4.9 2.8 L7.2 5.6 L4.9 8.4" fill="none" stroke="#555" stroke-width="0.8"/></svg>
<div class="ab" style="left:915.3px;top:487.7px;width:41px;height:10.8px;border:0.7px solid #e3e3e3;border-radius:1px"></div>
<div class="t" style="left:918.5px;top:488.3px;color:#555;font-size:7px">10 <span class="cj cj1" style="width:7.00px">条</span>/<span class="cj cj1" style="width:7.00px">页</span></div>
<svg class="ab" style="left:947px;top:491.5px" width="5" height="3.5" viewBox="0 0 5 3.5"><path d="M0.3 0.3 L2.5 3 L4.7 0.3" fill="none" stroke="#bbb" stroke-width="0.6"/></svg>
<div class="t" style="left:961.5px;top:488px;color:#444;font-size:7.3px"><span class="cj" style="width:14.00px">跳至</span></div>
<div class="ab" style="left:979.7px;top:488px;width:21px;height:10.5px;border:0.7px solid #e3e3e3;border-radius:1px"></div>
<div class="t" style="left:1005.5px;top:488px;color:#444;font-size:7.3px"><span class="cj cj1" style="width:7.00px">页</span></div>
</body></html>
